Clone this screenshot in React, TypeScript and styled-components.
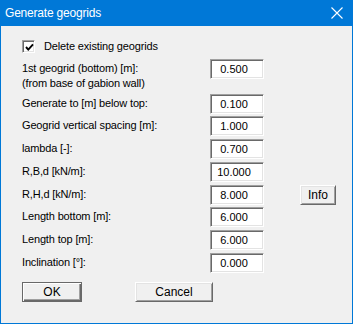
import React from 'react'
import styled, { createGlobalStyle } from 'styled-components'

const GlobalStyle = createGlobalStyle`
  html, body {
    margin: 0;
    padding: 0;
    background: #f0f0f0;
  }
  * {
    box-sizing: border-box;
  }
`

type Field = { label: string[]; value: string; space: number; info?: boolean }

const fields: Field[] = [
  { label: ['1st geogrid (bottom) [m]:', '(from base of gabion wall)'], value: '0.500', space: 6 },
  { label: ['Generate to [m] below top:'], value: '0.100', space: 3 },
  { label: ['Geogrid vertical spacing [m]:'], value: '1.000', space: 2 },
  { label: ['lambda [-]:'], value: '0.700', space: 3 },
  { label: ['R,B,d [kN/m]:'], value: '10.000', space: 3 },
  { label: ['R,H,d [kN/m]:'], value: '8.000', space: 3, info: true },
  { label: ['Length bottom [m]:'], value: '6.000', space: 2 },
  { label: ['Length top [m]:'], value: '6.000', space: 3 },
  { label: ['Inclination [°]:'], value: '0.000', space: 3 },
]

export default function App() {
  return (
    <>
      <GlobalStyle />
      <Window>
        <TitleBar>
          <Title>Generate geogrids</Title>
          <CloseIcon width="12" height="12" viewBox="0 0 12 12">
            <path d="M0.5 0.5 L11.5 11.5 M11.5 0.5 L0.5 11.5" stroke="#fff" strokeWidth="1.1" fill="none" />
          </CloseIcon>
        </TitleBar>
        <Body>
          <CheckRow>
            <CheckBox>
              <svg width="9" height="9" viewBox="0 0 9 9">
                <path d="M1 4 L3.3 6.6 L8 1.4" stroke="#000" strokeWidth="1.9" fill="none" />
              </svg>
            </CheckBox>
            <Text>Delete existing geogrids</Text>
          </CheckRow>
          {fields.map((f) => (
            <Row key={f.value + f.label[0]} $space={f.space}>
              <Label>
                {f.label.map((l) => (
                  <div key={l}>{l}</div>
                ))}
              </Label>
              <Input>{f.value}</Input>
              <span />
              {f.info && <Button $width={36}>Info</Button>}
            </Row>
          ))}
          <ButtonRow>
            <Button $width={60} $default>
              OK
            </Button>
            <Button $width={78}>Cancel</Button>
          </ButtonRow>
        </Body>
      </Window>
    </>
  )
}

const Window = styled.div`
  width: 353px;
  height: 324px;
  display: flex;
  flex-direction: column;
  background: #f0f0f0;
  border: 1px solid #0078d7;
  border-top: none;
  font-family: 'Liberation Sans', Arial, sans-serif;
  font-size: 11px;
  color: #000;
`
const TitleBar = styled.div`
  height: 26px;
  margin: 0 -1px;
  padding: 0 10px 0 5px;
  background: #0078d7;
  display: flex;
  align-items: center;
  justify-content: space-between;
`
const Title = styled.span`
  font-family: 'Liberation Sans', Arial, sans-serif;
  font-size: 12px;
  letter-spacing: -0.2px;
  color: #fff;
  padding-bottom: 1px;
`
const CloseIcon = styled.svg`
  display: block;
`
const Body = styled.div`
  padding: 14px 0 0 21px;
  display: flex;
  flex-direction: column;
`
const CheckRow = styled.div`
  display: flex;
  align-items: center;
  gap: 9px;
  height: 13px;
`
const CheckBox = styled.div`
  width: 13px;
  height: 13px;
  background: #fff;
  border: 1px solid;
  border-color: #a0a0a0 #fff #fff #a0a0a0;
  box-shadow: inset 1px 1px 0 #696969, inset -1px -1px 0 #e3e3e3;
  display: flex;
  align-items: center;
  justify-content: center;
  padding-left: 1px;
  padding-top: 1px;
  svg {
    display: block;
  }
`
const Text = styled.span`
  line-height: 13px;
  letter-spacing: -0.15px;
`
const Row = styled.div<{ $space: number }>`
  display: grid;
  grid-template-columns: 188px 54px 36px 36px;
  align-items: start;
  margin-top: ${({ $space }) => $space}px;
`
const Label = styled.div`
  padding-top: 2px;
  line-height: 15px;
  letter-spacing: -0.15px;
  white-space: nowrap;
`
const Input = styled.div`
  height: 20px;
  background: #fff;
  border: 1px solid;
  border-color: #a0a0a0 #fff #fff #a0a0a0;
  box-shadow: inset 1px 1px 0 #696969, inset -1px -1px 0 #e3e3e3;
  text-align: center;
  padding-right: 6px;
  line-height: 18px;
`
const Button = styled.div<{ $width: number; $default?: boolean }>`
  width: ${({ $width }) => $width}px;
  height: 20px;
  background: #f0f0f0;
  border: 1px solid;
  border-color: ${({ $default }) => ($default ? '#696969' : '#fff #696969 #696969 #fff')};
  box-shadow: ${({ $default }) =>
    $default
      ? 'inset 1px 1px 0 #fff, inset -1px -1px 0 #696969, inset -2px -2px 0 #a0a0a0'
      : 'inset 1px 1px 0 #e3e3e3, inset -1px -1px 0 #a0a0a0'};
  text-align: center;
  line-height: 18px;
  font-size: 12px;
`
const ButtonRow = styled.div`
  display: flex;
  gap: 53px;
  margin-top: 9px;
`
